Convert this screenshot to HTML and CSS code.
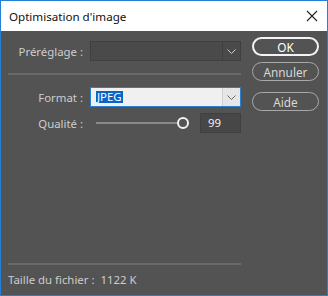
FILE: index.html
```html
<!DOCTYPE html>
<html lang="fr">
<head>
  <meta charset="UTF-8" />
  <title>Optimisation d'image</title>
  <link rel="stylesheet" href="styles.css">
</head>
<body>

  <div class="window">
    <!-- Title bar -->
    <div class="titlebar">
      <span class="title">Optimisation d'image</span>
      <svg class="close" width="12" height="12" viewBox="0 0 12 12">
        <path d="M1 1 L11 11 M11 1 L1 11" stroke="#222" stroke-width="1.1" fill="none"/>
      </svg>
    </div>

    <div class="dialog">
      <div class="main">
        <div class="row preset-row">
          <label class="label">Préréglage :</label>
          <div class="select dark-select">
            <span class="select-value"></span>
            <span class="chevron">
              <svg width="9" height="5" viewBox="0 0 9 5"><path d="M0.5 0.5 L4.5 4.5 L8.5 0.5" stroke="#cfcfcf" fill="none"/></svg>
            </span>
          </div>
        </div>

        <div class="separator"></div>

        <div class="row format-row">
          <label class="label">Format :</label>
          <div class="select light-select">
            <span class="select-value"><span class="selected-text">JPEG</span></span>
            <span class="chevron">
              <svg width="9" height="5" viewBox="0 0 9 5"><path d="M0.5 0.5 L4.5 4.5 L8.5 0.5" stroke="#6a6a6a" fill="none"/></svg>
            </span>
          </div>
        </div>

        <div class="row quality-row">
          <label class="label">Qualité :</label>
          <div class="slider">
            <div class="track"></div>
            <div class="knob"></div>
          </div>
          <div class="number">99</div>
        </div>

        <div class="spacer"></div>
        <div class="separator bottom-sep"></div>
        <div class="filesize">Taille du fichier :&nbsp; 1122 K</div>
      </div>

      <div class="buttons">
        <button class="btn btn-default">OK</button>
        <button class="btn">Annuler</button>
        <button class="btn btn-help">Aide</button>
      </div>
    </div>
  </div>

</body>
</html>
```

FILE: styles.css
```css
/* Base */
body {
  margin: 0;
  font-family: "Noto Sans", "Open Sans", sans-serif;
  font-size: 11.4px;
  background: #fff;
}

/* Window frame */
.window {
  width: 328px;
  height: 296px;
  box-sizing: border-box;
  border: 1px solid #2480d6;
  display: flex;
  flex-direction: column;
}

.titlebar {
  height: 30px;
  background: #fff;
  display: flex;
  align-items: center;
  justify-content: space-between;
  padding: 0 9px 0 8px;
  flex-shrink: 0;
}

.title {
  color: #111;
  font-size: 11.6px;
}

/* Dialog body */
.dialog {
  flex: 1;
  background: #535353;
  display: flex;
  color: #cdcdcd;
}

.main {
  width: 233px;
  padding: 10px 0 0 7px;
  display: flex;
  flex-direction: column;
}

.row {
  display: flex;
  align-items: center;
  height: 20px;
}

.label {
  width: 82px;
  padding-right: 7px;
  text-align: right;
  box-sizing: border-box;
  white-space: nowrap;
}

.select {
  width: 151px;
  height: 20px;
  box-sizing: border-box;
  display: flex;
  border: 1px solid #454545;
}

.select-value {
  flex: 1;
  display: flex;
  align-items: center;
  padding-left: 5px;
}

.chevron {
  width: 17px;
  display: flex;
  align-items: center;
  justify-content: center;
}

.dark-select {
  background: #4a4a4a;
  border-color: #3f3f3f;
}
.dark-select .chevron {
  border-left: 1px solid #3f3f3f;
}

.light-select {
  background: #f0f0f0;
  border-color: #2a7fd1;
}
.light-select .chevron {
  background: #e6e6e6;
  border-left: 1px solid #d0d0d0;
}

.selected-text {
  background: #0a64c8;
  color: #fff;
  padding: 0 1px;
  line-height: 12px;
}

.separator {
  height: 2px;
  width: 233px;
  background: #696969;
  margin: 12px 0 12px 0;
}

.format-row {
  margin-bottom: 6px;
}

/* Quality slider */
.slider {
  width: 104px;
  height: 20px;
  margin-left: 6px;
  position: relative;
}
.track {
  position: absolute;
  left: 0;
  width: 82px;
  top: 9px;
  height: 2px;
  background: #8a8a8a;
}
.knob {
  position: absolute;
  left: 81px;
  top: 4px;
  width: 8px;
  height: 8px;
  border: 2px solid #f2f2f2;
  border-radius: 50%;
  background: #535353;
}

.number {
  width: 41px;
  height: 20px;
  box-sizing: border-box;
  background: #474747;
  border: 1px solid #404040;
  color: #f0f0f0;
  padding-left: 7px;
  line-height: 18px;
}

.spacer {
  flex: 1;
}

.bottom-sep {
  margin: 0 0 7px 0;
}

.filesize {
  height: 16px;
  line-height: 16px;
  margin-bottom: 7px;
  color: #cdcdcd;
}

/* Buttons */
.buttons {
  display: flex;
  flex-direction: column;
  padding: 6px 0 0 11px;
}

.btn {
  width: 67px;
  height: 19px;
  border-radius: 10px;
  background: #535353;
  border: 1px solid #a8a8a8;
  color: #d8d8d8;
  font-family: inherit;
  font-size: 11.8px;
  padding: 0;
  margin-bottom: 6px;
  line-height: 16px;
}

.btn-default {
  border: 2px solid #f4f4f4;
  color: #fff;
}

.btn-help {
  margin-top: 5px;
}
```
